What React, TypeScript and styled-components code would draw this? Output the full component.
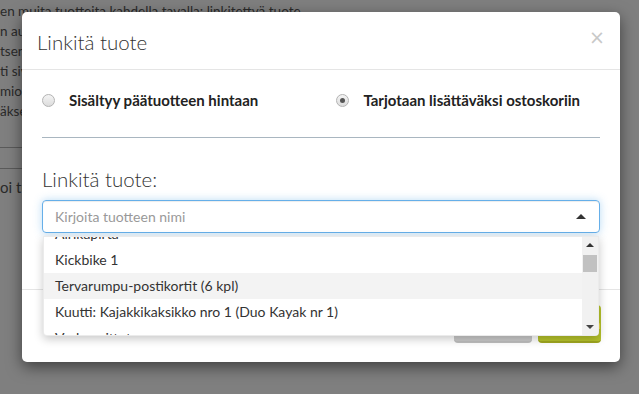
import React from "react";
import styled, { createGlobalStyle, css } from "styled-components";

const GlobalStyle = createGlobalStyle`
  html, body { margin: 0; padding: 0; background: #fff; }
  body {
    font-family: Lato, "Open Sans", "Liberation Sans", sans-serif;
    color: #333;
    overflow: hidden;
  }
  * { box-sizing: border-box; }
`;

const Page = styled.div`
  position: relative;
  width: 639px;
  height: 394px;
  overflow: hidden;
`;

const Background = styled.div`
  display: flex;
  flex-direction: column;
  padding-top: 1px;
  font-size: 13.5px;
  color: #555;
  white-space: nowrap;
`;

const BgLine = styled.div<{ $clip?: boolean }>`
  height: 20px;
  line-height: 20px;
  overflow: hidden;
  ${(p) => p.$clip && css`width: 22px;`}
`;

const BgTable = styled.div`
  margin-top: 26px;
  display: flex;
  flex-direction: column;
`;

const BgRow = styled.div<{ $tall?: boolean }>`
  border-top: 1px solid #b5b5b5;
  height: ${(p) => (p.$tall ? "40px" : "21px")};
  line-height: ${(p) => (p.$tall ? "36px" : "21px")};
  font-size: 15px;
  width: 22px;
  overflow: hidden;
  white-space: nowrap;
`;

const Overlay = styled.div`
  position: absolute;
  inset: 0;
  background: rgba(0, 0, 0, 0.5);
`;

const Modal = styled.div`
  position: absolute;
  top: 12px;
  left: 22px;
  width: 598px;
  background: #fff;
  border-radius: 5px;
  box-shadow: 0 5px 15px rgba(0, 0, 0, 0.5);
  display: flex;
  flex-direction: column;
`;

const Header = styled.div`
  display: flex;
  align-items: flex-start;
  justify-content: space-between;
  padding: 15px 15px 12px;
  border-bottom: 1px solid #e5e5e5;
`;

const Title = styled.h4`
  margin: 0;
  font-size: 20.5px;
  font-weight: 300;
  line-height: 30px;
  color: #333;
`;

const Close = styled.span`
  font-family: "DejaVu Sans", sans-serif;
  font-size: 19px;
  line-height: 1;
  color: #c8c8c8;
  margin-top: 1px;
  margin-right: 0;
`;

const Body = styled.div`
  padding: 20px 20px 20px;
  display: flex;
  flex-direction: column;
`;

const RadioRow = styled.div`
  display: flex;
  height: 20px;
  align-items: center;
`;

const RadioOption = styled.label<{ $grow?: boolean; $right?: number }>`
  display: flex;
  align-items: center;
  gap: 14px;
  ${(p) => p.$grow && css`flex: 1;`}
  margin-right: ${(p) => p.$right ?? 0}px;
  font-size: 15px;
  font-weight: 700;
  color: #222;
`;

const RadioDot = styled.span<{ $checked?: boolean }>`
  width: 13px;
  height: 13px;
  border-radius: 50%;
  border: 1px solid #b3b3b3;
  background: linear-gradient(#f4f4f4, #dcdcdc);
  display: flex;
  align-items: center;
  justify-content: center;
  &::after {
    content: "";
    width: 5px;
    height: 5px;
    border-radius: 50%;
    background: #555;
    display: ${(p) => (p.$checked ? "block" : "none")};
  }
`;

const Divider = styled.hr`
  margin: 27px 0 0;
  border: 0;
  border-top: 1px solid #a9b6c0;
`;

const FieldLabel = styled.div`
  margin-top: 26px;
  font-size: 20.5px;
  font-weight: 300;
  line-height: 30px;
  color: #333;
`;

const Field = styled.div`
  position: relative;
  margin-top: 6px;
  margin-bottom: 36px;
`;

const InputBox = styled.div`
  height: 33px;
  border: 1px solid #66afe9;
  border-radius: 4px;
  box-shadow: inset 0 1px 1px rgba(0, 0, 0, 0.075), 0 0 8px rgba(102, 175, 233, 0.45);
  display: flex;
  align-items: center;
  padding: 0 13px 0 12px;
  font-size: 14px;
  color: #999;
`;

const Placeholder = styled.span`
  flex: 1;
`;

const CaretUp = styled.span<{ $small?: boolean }>`
  width: 0;
  height: 0;
  border-left: ${(p) => (p.$small ? 4 : 5)}px solid transparent;
  border-right: ${(p) => (p.$small ? 4 : 5)}px solid transparent;
  border-bottom: ${(p) => (p.$small ? 4 : 5)}px solid #333;
`;

const CaretDown = styled.span`
  width: 0;
  height: 0;
  border-left: 4px solid transparent;
  border-right: 4px solid transparent;
  border-top: 4px solid #444;
`;

const Dropdown = styled.div`
  position: absolute;
  top: 36px;
  left: 1px;
  right: 1px;
  height: 100px;
  background: #fff;
  border: 1px solid rgba(0, 0, 0, 0.08);
  border-radius: 0 0 4px 4px;
  box-shadow: 0 3px 10px rgba(0, 0, 0, 0.22);
  display: flex;
  overflow: hidden;
  z-index: 2;
`;

const ItemViewport = styled.div`
  flex: 1;
  overflow: hidden;
`;

const ItemList = styled.ul`
  list-style: none;
  margin: -16px 0 0;
  padding: 0;
`;

const Item = styled.li<{ $active?: boolean }>`
  height: 26px;
  line-height: 26px;
  padding: 0 11px;
  font-size: 14px;
  color: #333;
  white-space: nowrap;
  background: ${(p) => (p.$active ? "#f3f3f3" : "transparent")};
`;

const ScrollTrack = styled.div`
  width: 16px;
  background: #f1f1f1;
  display: flex;
  flex-direction: column;
  align-items: center;
`;

const ScrollArrow = styled.div`
  height: 16px;
  display: flex;
  align-items: center;
  justify-content: center;
`;

const ScrollThumb = styled.div`
  margin-top: 2px;
  width: 14px;
  height: 17px;
  background: #c1c1c1;
`;

const ScrollSpacer = styled.div`
  flex: 1;
`;

const Footer = styled.div`
  border-top: 1px solid #e5e5e5;
  padding: 15px 19px 19px;
  display: flex;
  justify-content: flex-end;
  gap: 6px;
`;

const Button = styled.button<{ $primary?: boolean }>`
  height: 38px;
  border: 0;
  border-radius: 4px;
  font-family: inherit;
  font-size: 14px;
  color: #fff;
  padding: 0 12px;
  ${(p) =>
    p.$primary
      ? css`
          width: 63px;
          background: #b5c22b;
          border-bottom: 2px solid #9ea61f;
        `
      : css`
          width: 78px;
          background: #c9c9c9;
          border-bottom: 2px solid #bdbdbd;
        `}
`;

const items = [
  "Airikapirta",
  "Kickbike 1",
  "Tervarumpu-postikortit (6 kpl)",
  "Kuutti: Kajakkikaksikko nro 1 (Duo Kayak nr 1)",
  "Verlan uittotupa",
];

const bgLines = [
  "n automaattisesti",
  "tsen hintaan",
  "ti sivulla",
  "mioi tuotetta",
  "äksesi",
];

export default function App() {
  return (
    <>
      <GlobalStyle />
      <Page>
        <Background>
          <BgLine>en muita tuotteita kahdella tavalla: linkitettyä tuote</BgLine>
          {bgLines.map((l) => (
            <BgLine key={l} $clip>
              {l}
            </BgLine>
          ))}
          <BgTable>
            <BgRow />
            <BgRow $tall>oi tuote</BgRow>
          </BgTable>
        </Background>
        <Overlay />
        <Modal role="dialog">
          <Header>
            <Title>Linkitä tuote</Title>
            <Close>×</Close>
          </Header>
          <Body>
            <RadioRow>
              <RadioOption $grow>
                <RadioDot />
                Sisältyy päätuotteen hintaan
              </RadioOption>
              <RadioOption $right={20}>
                <RadioDot $checked />
                Tarjotaan lisättäväksi ostoskoriin
              </RadioOption>
            </RadioRow>
            <Divider />
            <FieldLabel>Linkitä tuote:</FieldLabel>
            <Field>
              <InputBox>
                <Placeholder>Kirjoita tuotteen nimi</Placeholder>
                <CaretUp />
              </InputBox>
              <Dropdown>
                <ItemViewport>
                  <ItemList>
                    {items.map((it, i) => (
                      <Item key={it} $active={i === 2}>
                        {it}
                      </Item>
                    ))}
                  </ItemList>
                </ItemViewport>
                <ScrollTrack>
                  <ScrollArrow>
                    <CaretUp $small />
                  </ScrollArrow>
                  <ScrollThumb />
                  <ScrollSpacer />
                  <ScrollArrow>
                    <CaretDown />
                  </ScrollArrow>
                </ScrollTrack>
              </Dropdown>
            </Field>
          </Body>
          <Footer>
            <Button>Peruuta</Button>
            <Button $primary>Tallenna</Button>
          </Footer>
        </Modal>
      </Page>
    </>
  );
}
